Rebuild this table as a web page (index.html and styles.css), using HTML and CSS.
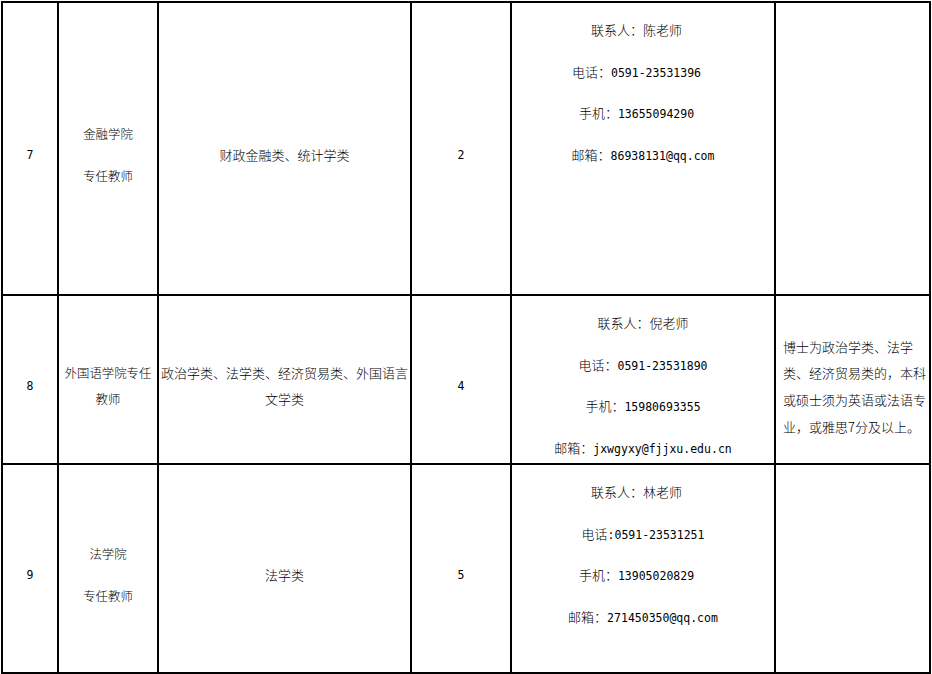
FILE: index.html
```html
<!DOCTYPE html>
<html lang="zh-CN">
<head>
<meta charset="utf-8">
<title>招聘岗位</title>
<link rel="stylesheet" href="styles.css">
</head>
<body>
<div class="sheet">
  <div class="cell"><p class="ln num">7</p></div>
  <div class="cell narrow"><p class="ln">金融学院</p><p class="ln">专任教师</p></div>
  <div class="cell"><p class="ln">财政金融类、统计学类</p></div>
  <div class="cell"><p class="ln num">2</p></div>
  <div class="cell contact">
    <p class="ln shift">联系人：陈老师</p>
    <p class="ln shift">电话：<span class="mono">0591-23531396</span></p>
    <p class="ln shift">手机：<span class="mono">13655094290</span></p>
    <p class="ln">邮箱：<span class="mono">86938131@qq.com</span></p>
  </div>
  <div class="cell"></div>

  <div class="cell"><p class="ln num">8</p></div>
  <div class="cell narrow"><p class="ln wrap">外国语学院专任<br>教师</p></div>
  <div class="cell"><p class="ln wrap">政治学类、法学类、经济贸易类、外国语言<br>文学类</p></div>
  <div class="cell"><p class="ln num">4</p></div>
  <div class="cell contact">
    <p class="ln">联系人：倪老师</p>
    <p class="ln">电话：<span class="mono">0591-23531890</span></p>
    <p class="ln">手机：<span class="mono">15980693355</span></p>
    <p class="ln">邮箱：<span class="mono">jxwgyxy@fjjxu.edu.cn</span></p>
  </div>
  <div class="cell"><p class="note">博士为政治学类、法学<br>类、经济贸易类的，本科<br>或硕士须为英语或法语专<br>业，或雅思7分及以上。</p></div>

  <div class="cell"><p class="ln num">9</p></div>
  <div class="cell narrow"><p class="ln">法学院</p><p class="ln">专任教师</p></div>
  <div class="cell"><p class="ln">法学类</p></div>
  <div class="cell"><p class="ln num">5</p></div>
  <div class="cell contact">
    <p class="ln shift">联系人：林老师</p>
    <p class="ln">电话<span class="mono">:0591-23531251</span></p>
    <p class="ln shift">手机：<span class="mono">13905020829</span></p>
    <p class="ln">邮箱：<span class="mono">271450350@qq.com</span></p>
  </div>
  <div class="cell"></div>
</div>
</body>
</html>
```

FILE: styles.css
```css
html, body {
  background: #fff;
}
body {
  margin: 1px 0 0 1px;
  overflow: hidden;
  font-family: "Noto Sans CJK SC", "Noto Sans", sans-serif;
  font-size: 13px;
  font-weight: 300;
  color: #000;
}
.sheet {
  display: grid;
  grid-template-columns: 54px 98px 251px 98px 262px 153px;
  grid-template-rows: 291px 167px 207px;
  gap: 2px;
  padding: 2px;
  background: #000;
  width: 930px;
  box-sizing: border-box;
}
.cell {
  background: #fff;
  display: flex;
  flex-direction: column;
  justify-content: center;
  align-items: stretch;
  text-align: center;
  overflow: hidden;
}
.cell.contact {
  justify-content: flex-start;
}
.ln {
  margin: 0;
  padding-top: 13.17px;
  height: 28.5px;
  line-height: 28px;
  white-space: nowrap;
}
.ln.wrap {
  height: auto;
  line-height: 26px;
}
.narrow .ln {
  font-size: 12.4px;
}
.shift {
  padding-right: 13px;
}
.num {
  font-family: "DejaVu Sans Mono", monospace;
  font-size: 11.5px;
  font-weight: 400;
}
.mono {
  font-family: "DejaVu Sans Mono", monospace;
  font-size: 11.5px;
  font-weight: 400;
  line-height: 0;
}
.note {
  margin: 0;
  padding: 15px 0 0 7px;
  line-height: 26.7px;
  text-align: left;
  white-space: nowrap;
}
```
